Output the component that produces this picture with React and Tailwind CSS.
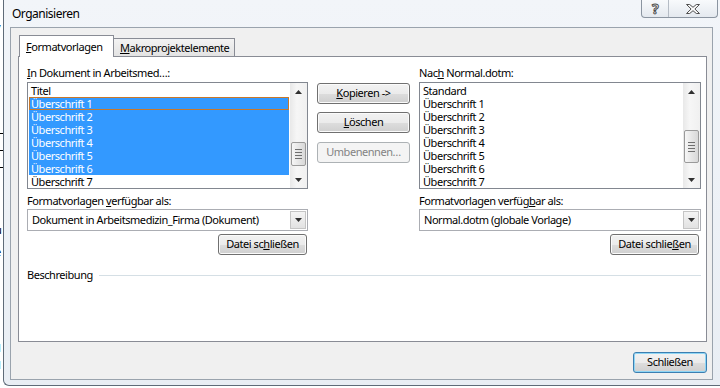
import React from "react";

const btn =
  "h-[21px] flex items-center justify-center rounded-[3px] border border-[#707070] bg-[linear-gradient(#f2f2f2_0%,#ebebeb_50%,#dddddd_51%,#cfcfcf_100%)] shadow-[inset_0_0_0_1px_#fbfbfb] text-black";

const leftItems = [
  "Titel",
  "Überschrift 1",
  "Überschrift 2",
  "Überschrift 3",
  "Überschrift 4",
  "Überschrift 5",
  "Überschrift 6",
  "Überschrift 7",
];
const rightItems = ["Standard", ...leftItems.slice(1)];

function Arrow({ down }) {
  return (
    <svg width="7" height="4" viewBox="0 0 7 4">
      <path d={down ? "M0 0h7L3.5 4z" : "M0 4h7L3.5 0z"} fill="#303030" />
    </svg>
  );
}

function Scrollbar({ thumbTop, thumbH }) {
  return (
    <div className="w-[17px] flex flex-col bg-[linear-gradient(90deg,#e8e8e8,#f6f6f6_40%,#f0f0f0)]">
      <div className="h-[17px] flex items-center justify-center">
        <Arrow />
      </div>
      <div className="flex-1 flex flex-col items-center">
        <div
          className="w-[15px] flex flex-col items-center justify-center gap-[2px] rounded-[2px] border border-[#9a9a9a] bg-[linear-gradient(90deg,#f6f6f6,#e6e6e6_50%,#d8d8d8)]"
          style={{ marginTop: thumbTop, height: thumbH }}
        >
          <div className="w-[7px] h-px bg-[#6f6f6f]" />
          <div className="w-[7px] h-px bg-[#6f6f6f]" />
          <div className="w-[7px] h-px bg-[#6f6f6f]" />
          <div className="w-[7px] h-px bg-[#6f6f6f]" />
        </div>
      </div>
      <div className="h-[17px] flex items-center justify-center">
        <Arrow down />
      </div>
    </div>
  );
}

function ListBox({ items, selected = [], focus = -1, thumbTop, thumbH }) {
  return (
    <div className="h-[107px] border border-[#828790] bg-white flex">
      <div className="flex-1 pt-px px-px overflow-hidden">
        {items.map((it, i) => (
          <div
            key={i}
            className={`h-[13px] leading-[13px] pl-[2px] whitespace-nowrap ${
              selected.includes(i) ? "bg-[#3399ff] text-white" : "text-black"
            } ${focus === i ? "outline outline-1 -outline-offset-1 outline-[#c8782a]" : ""}`}
          >
            {it}
          </div>
        ))}
      </div>
      <Scrollbar thumbTop={thumbTop} thumbH={thumbH} />
    </div>
  );
}

function Combo({ value }) {
  return (
    <div className="h-[22px] border border-[#abadb3] bg-white flex items-center p-px">
      <div className="flex-1 pl-[3px] whitespace-nowrap">{value}</div>
      <div className="w-[16px] h-full flex items-center justify-center border border-[#c5c5c5] bg-[linear-gradient(#f4f4f4,#e2e2e2)]">
        <Arrow down />
      </div>
    </div>
  );
}

export default function App() {
  return (
    <div className="w-[720px] h-[388px] overflow-hidden flex bg-white font-['Noto_Sans',sans-serif] text-[11px] tracking-[-0.45px] text-black">
      <div className="w-[3px] flex flex-col overflow-hidden text-[11px] leading-[13px]">
        <div className="-ml-[4px] mt-[3px]">l</div>
        <div className="-ml-[5px] mt-[4px]">v</div>
        <div className="h-px w-[3px] bg-black mt-[100px]" />
        <div className="h-px w-[3px] bg-black mt-[16px]" />
        <div className="h-px w-[3px] bg-black mt-[16px]" />
        <div className="-ml-[5px] mt-[55px]">u</div>
        <div className="-ml-[5px] mt-[9px]">e</div>
        <div className="-ml-[5px] mt-[2px]">s</div>
        <div className="-ml-[4px] mt-[68px]">1</div>
        <div className="-ml-[4px] mt-[4px]">1</div>
      </div>

      <div className="flex-1 h-[386px] flex flex-col rounded-bl-[6px] border-l border-b border-[#5f6b78] bg-[linear-gradient(#f2f5f9,#e9eef4)] pr-[7px]">
        <div className="h-[27px] flex items-start justify-between">
          <div className="pl-[8px] pt-[5px] text-[12px] tracking-[-0.5px]">Organisieren</div>
          <div className="flex h-[18px] border border-t-0 border-[#8b95a1] rounded-b-[4px] bg-[linear-gradient(#f8fafc,#e4e9ef)] -mr-[5px]">
            <div className="w-[27px] flex items-center justify-center border-r border-[#b5bcc5] text-[14px] font-bold text-transparent [-webkit-text-stroke:1px_#4e4e4e]">
              ?
            </div>
            <div className="w-[48px] flex items-center justify-center">
              <svg width="14" height="10" viewBox="0 0 14 10">
                <path
                  d="M0.5 0.5h3.2l3.3 2.8 3.3-2.8h3.2l-4.6 4.5 4.6 4.5h-3.2l-3.3-2.8-3.3 2.8H0.5l4.6-4.5z"
                  fill="#fafafa"
                  stroke="#4e4e4e"
                  strokeWidth="1"
                />
              </svg>
            </div>
          </div>
        </div>

        <div className="ml-[6px] flex-1 mb-[5px] border border-[#9aa3ad] bg-[#f0f0f0] flex flex-col pl-[7px] pr-[5px]">
          <div className="flex items-end mt-[6px] pl-px h-[22px]">
            <div className="w-[95px] h-[22px] -mb-px relative z-10 pl-[6px] pt-[3px] border border-b-0 border-[#898c95] bg-white">
              <span className="underline">F</span>ormatvorlagen
            </div>
            <div className="w-[121px] h-[18px] pl-[6px] pt-[1px] border-t border-r border-[#898c95] bg-[linear-gradient(#f3f3f3,#e3e3e3)]">
              <span className="underline">M</span>akroprojektelemente
            </div>
          </div>

          <div className="h-[286px] border border-[#898c95] bg-white pt-[8px] pl-[8px] flex flex-col">
            <div className="flex">
              <div className="w-[281px] flex flex-col">
                <div className="h-[16px] leading-[16px] mb-px">
                  <span className="underline">I</span>n Dokument in Arbeitsmed…:
                </div>
                <ListBox
                  items={leftItems}
                  selected={[1, 2, 3, 4, 5, 6]}
                  focus={1}
                  thumbTop={42}
                  thumbH={24}
                />
                <div className="h-[16px] leading-[16px] mt-[4px]">
                  Formatvorlagen <span className="underline">v</span>erfügbar als:
                </div>
                <Combo value="Dokument in Arbeitsmedizin_Firma (Dokument)" />
                <div className="flex justify-end mt-[3px] pr-px">
                  <div className={`${btn} w-[89px]`}>
                    Datei sc<span className="underline">h</span>ließen
                  </div>
                </div>
              </div>

              <div className="w-[93px] ml-[9px] flex flex-col pt-[18px]">
                <div className={btn}>
                  <span className="underline">K</span>opieren -&gt;
                </div>
                <div className={`${btn} mt-[8px]`}>
                  <span className="underline">L</span>öschen
                </div>
                <div className="h-[21px] mt-[9px] flex items-center justify-center rounded-[3px] border border-[#adb2b5] bg-[#f4f4f4] text-[#838383]">
                  Umbenennen…
                </div>
              </div>

              <div className="w-[282px] ml-[9px] flex flex-col">
                <div className="h-[16px] leading-[16px] mb-px">
                  Nac<span className="underline">h</span> Normal.dotm:
                </div>
                <ListBox items={rightItems} thumbTop={30} thumbH={33} />
                <div className="h-[16px] leading-[16px] mt-[4px]">
                  Formatvorlagen verfüg<span className="underline">b</span>ar als:
                </div>
                <Combo value="Normal.dotm (globale Vorlage)" />
                <div className="flex justify-end mt-[3px] pr-[2px]">
                  <div className={`${btn} w-[89px]`}>
                    Datei schlie<span className="underline">ß</span>en
                  </div>
                </div>
              </div>
            </div>

            <div className="flex items-center mt-[12px] h-[16px] pr-[5px]">
              <div>Beschreibung</div>
              <div className="flex-1 h-px bg-[#d5dfe5] ml-[6px]" />
            </div>
          </div>

          <div className="flex justify-end mt-[10px]">
            <div className="h-[21px] w-[74px] flex items-center justify-center rounded-[3px] border border-[#3c7fb1] bg-[linear-gradient(#f2f2f2_0%,#ebebeb_50%,#dddddd_51%,#cfcfcf_100%)] shadow-[inset_0_0_0_1px_#8fd6f5]">
              Schließen
            </div>
          </div>
        </div>
      </div>
    </div>
  );
}
